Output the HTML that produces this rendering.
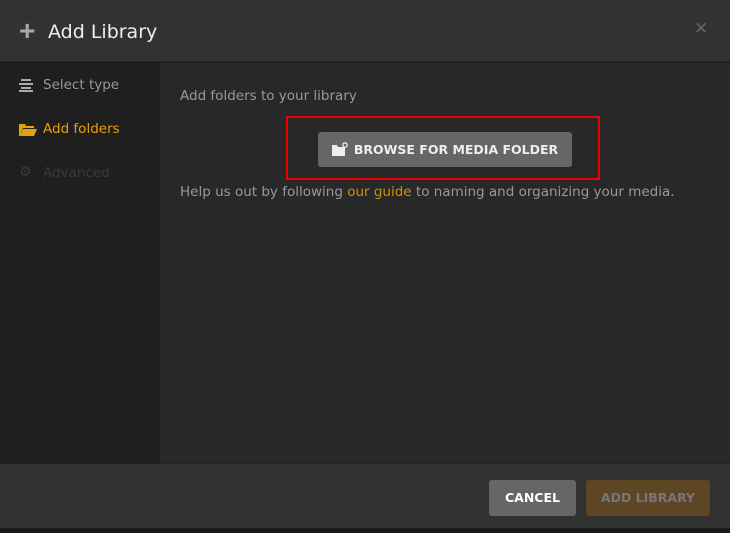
<!DOCTYPE html><html><head><style>
*{margin:0;padding:0;box-sizing:border-box}
body{width:730px;height:533px;background:#1a1a1a;font-family:"DejaVu Sans","Liberation Sans",sans-serif;position:relative;overflow:hidden}
.hdr{position:absolute;left:0;top:0;width:730px;height:62px;background:#323232;border-bottom:1px solid #262626}
.side{position:absolute;left:0;top:63px;width:160px;height:400px;background:#1f1f1f}
.main{position:absolute;left:160px;top:63px;width:570px;height:400px;background:#282828}
.ftr{position:absolute;left:0;top:463px;width:730px;height:65px;background:#323232;border-top:1px solid #222}
.t{position:absolute;white-space:nowrap}
.btn{position:absolute;border-radius:3px;font-weight:bold;font-size:12.5px;text-align:center;line-height:36px}
</style></head><body>
<div class="hdr">
<div class="t" style="left:19px;top:18px;font-size:28px;color:#aaa;line-height:26px;font-family:'Liberation Sans';font-weight:bold">+</div>
<div class="t" style="left:48px;top:21px;font-size:19px;color:#eee">Add Library</div>
<div class="t" style="left:694px;top:19px;font-size:17px;color:#666">✕</div>
</div>
<div class="side">
<svg class="t" style="left:19px;top:16px" width="14" height="13"><rect x="2" y="0" width="10" height="2" fill="#aaa"/><rect x="0" y="4" width="14" height="2" fill="#aaa"/><rect x="2" y="8" width="10" height="2" fill="#aaa"/><rect x="0" y="11" width="14" height="2" fill="#aaa"/></svg>
<div class="t" style="left:43px;top:14px;font-size:13.5px;color:#999">Select type</div>
<svg class="t" style="left:19px;top:60px" width="18" height="13"><path d="M0 1h6l1 2h8v2H4L1 13H0z" fill="#e5a00d"/><path d="M4 6h14l-3 7H1z" fill="#e5a00d"/></svg>
<div class="t" style="left:43px;top:58px;font-size:13.5px;color:#e5a00d">Add folders</div>
<div class="t" style="left:19px;top:101px;font-size:14px;color:#3a3a3a">⚙</div>
<div class="t" style="left:43px;top:102px;font-size:13.5px;color:#3a3a3a">Advanced</div>
</div>
<div class="main">
<div class="t" style="left:20px;top:25px;font-size:13.5px;color:#999">Add folders to your library</div>
<div style="position:absolute;left:126px;top:53px;width:314px;height:64px;border:2px solid #e00"></div>
<div class="btn" style="left:158px;top:69px;width:254px;height:35px;line-height:35px;background:#666;color:#eee">
<svg style="vertical-align:-2px;margin-right:6px" width="16" height="14"><path d="M0 3h5l1 2h7v9H0z" fill="#eee"/><circle cx="13" cy="3" r="2.2" fill="none" stroke="#eee" stroke-width="1.3"/></svg>BROWSE FOR MEDIA FOLDER</div>
<div class="t" style="left:20px;top:121px;font-size:13.5px;color:#999">Help us out by following <span style="color:#cc8f0c">our guide</span> to naming and organizing your media.</div>
</div>
<div class="ftr">
<div class="btn" style="left:489px;top:16px;width:87px;height:36px;background:#666;color:#fff">CANCEL</div>
<div class="btn" style="left:586px;top:16px;width:124px;height:36px;background:#5e4625;color:#777">ADD LIBRARY</div>
</div>
</body></html>
